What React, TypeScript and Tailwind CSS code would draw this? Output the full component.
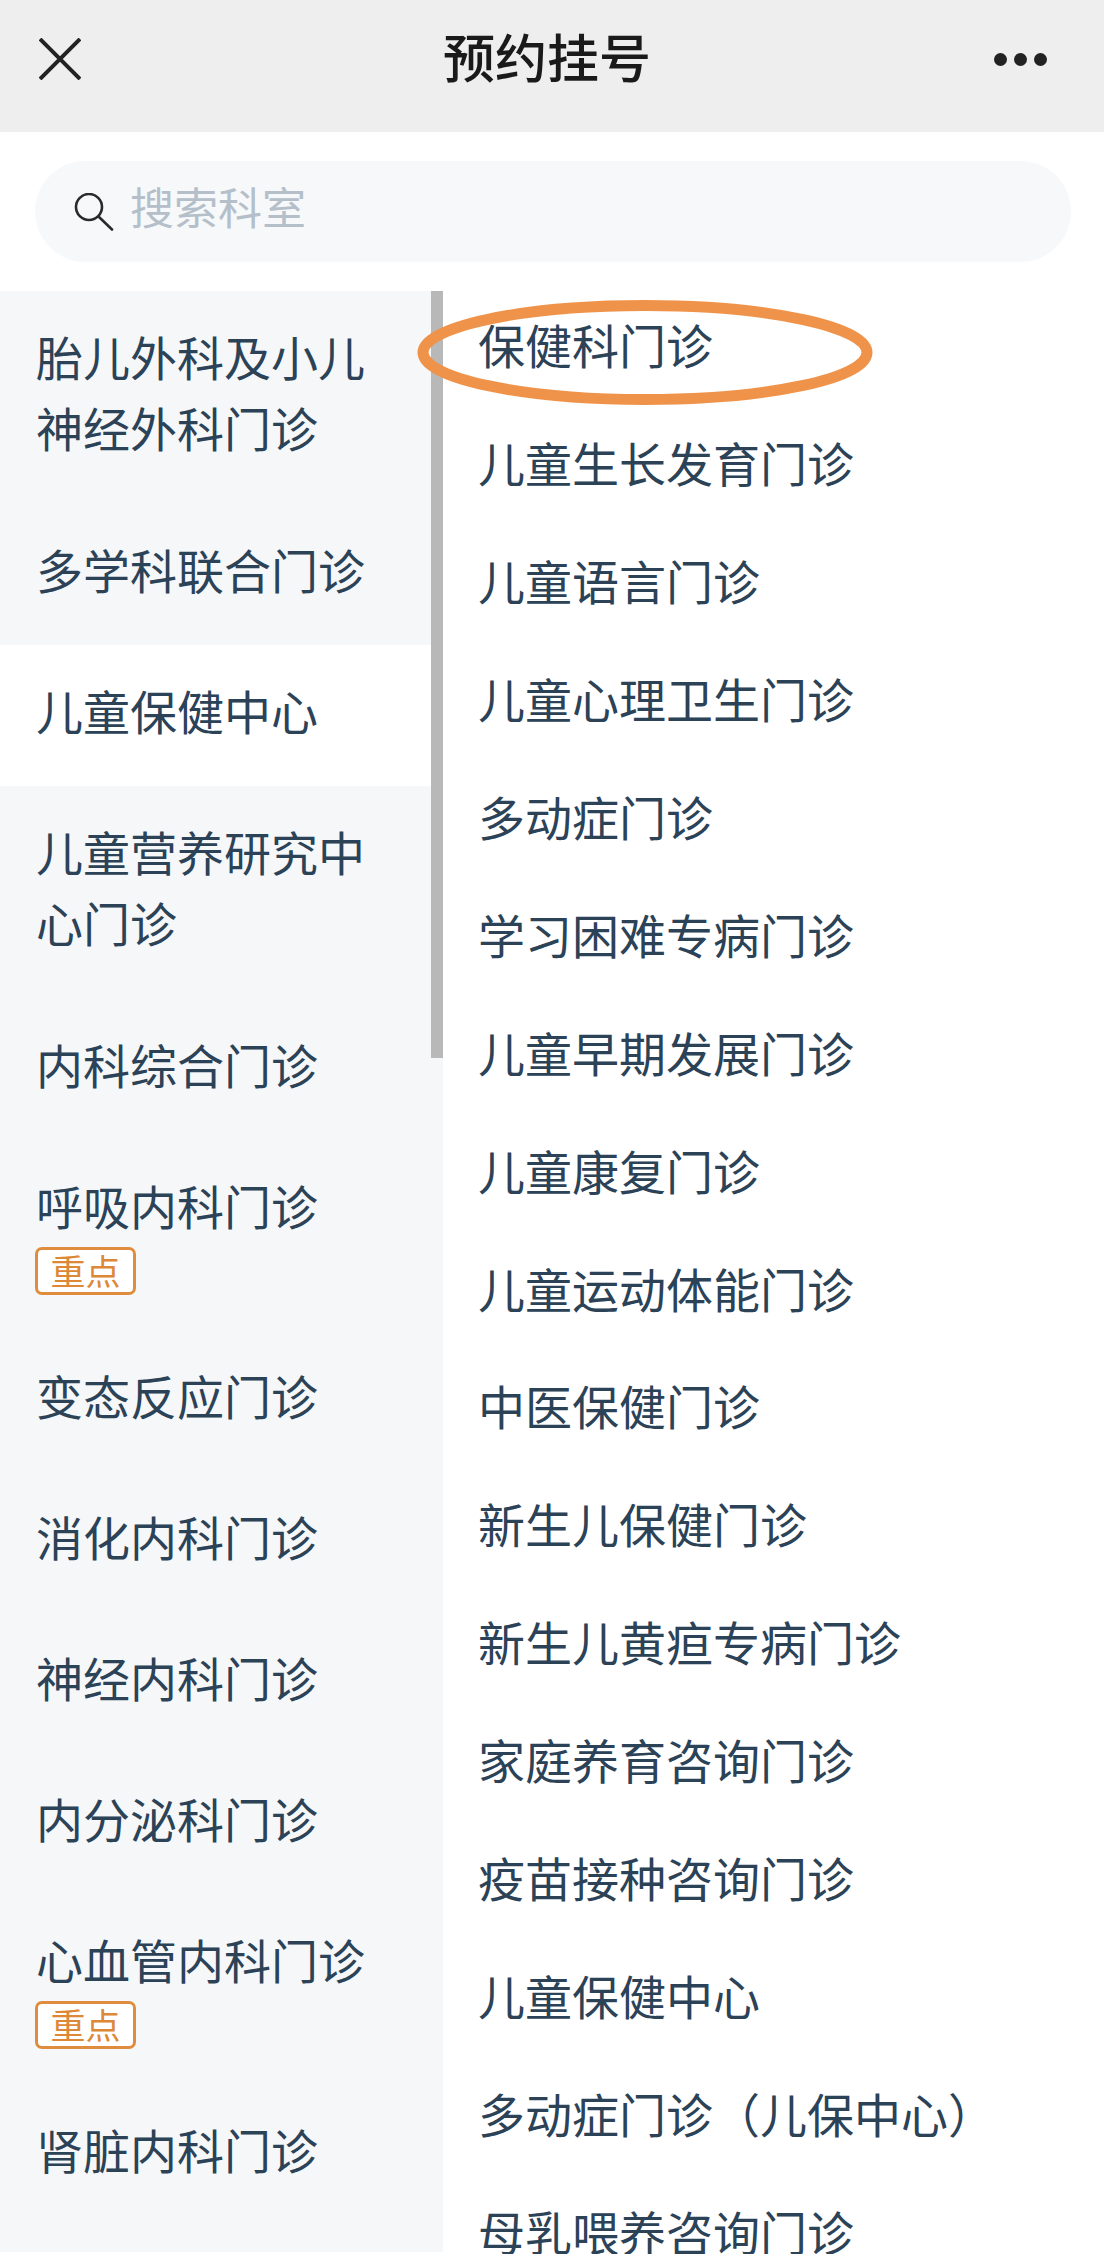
const font = { fontFamily: '"Noto Sans CJK SC", "Noto Sans", sans-serif' };

const departments = [
  { lines: ['胎儿外科及小儿', '神经外科门诊'] },
  { lines: ['多学科联合门诊'] },
  { lines: ['儿童保健中心'], active: true },
  { lines: ['儿童营养研究中', '心门诊'] },
  { lines: ['内科综合门诊'] },
  { lines: ['呼吸内科门诊'], badge: true },
  { lines: ['变态反应门诊'] },
  { lines: ['消化内科门诊'] },
  { lines: ['神经内科门诊'] },
  { lines: ['内分泌科门诊'] },
  { lines: ['心血管内科门诊'], badge: true },
  { lines: ['肾脏内科门诊'] },
];

const clinics = [
  '保健科门诊',
  '儿童生长发育门诊',
  '儿童语言门诊',
  '儿童心理卫生门诊',
  '多动症门诊',
  '学习困难专病门诊',
  '儿童早期发展门诊',
  '儿童康复门诊',
  '儿童运动体能门诊',
  '中医保健门诊',
  '新生儿保健门诊',
  '新生儿黄疸专病门诊',
  '家庭养育咨询门诊',
  '疫苗接种咨询门诊',
  '儿童保健中心',
  '多动症门诊（儿保中心）',
  '母乳喂养咨询门诊',
];

function Header() {
  return (
    <header className="flex h-[132px] items-center justify-between bg-[#eeeeee] pb-[14px] pl-[39px] pr-[57px]">
      <svg width="42" height="42" viewBox="0 0 42 42" fill="none" stroke="#222222" strokeWidth="4">
        <path d="M1 1 41 41M41 1 1 41" />
      </svg>
      <h1 className="mb-[6px] ml-[19px] text-[52px] font-medium leading-none text-[#1a1a1a]">预约挂号</h1>
      <div className="flex gap-[7px]">
        <span className="h-[13px] w-[13px] rounded-full bg-[#222222]" />
        <span className="h-[13px] w-[13px] rounded-full bg-[#222222]" />
        <span className="h-[13px] w-[13px] rounded-full bg-[#222222]" />
      </div>
    </header>
  );
}

function SearchBar() {
  return (
    <div className="h-[159px] pl-[35px] pr-[33px] pt-[29px]">
      <div className="flex h-[101px] items-center gap-[16px] rounded-full bg-[#f6f8fa] pl-[39px]">
        <svg width="40" height="38" viewBox="0 0 40 38" fill="none" stroke="#2a2a2a" strokeWidth="2.6" strokeLinecap="round">
          <circle cx="15" cy="14" r="13" />
          <path d="M25 24 38 36.5" />
        </svg>
        <span className="mb-[11px] text-[44px] leading-none text-[#b4bfca]">搜索科室</span>
      </div>
    </div>
  );
}

function Sidebar() {
  return (
    <aside className="relative w-[443px] shrink-0 bg-[#f5f7f9]">
      {departments.map((dept) => (
        <div
          key={dept.lines[0]}
          className={`px-[36px] pt-[29px] text-[47px] leading-[71px] ${dept.lines.length > 1 ? 'pb-[42px]' : 'pb-[41px]'} ${dept.badge ? '!pb-[35px]' : ''} ${dept.active ? 'bg-white' : ''}`}
        >
          {dept.lines.map((line) => (
            <div key={line} className="whitespace-nowrap">{line}</div>
          ))}
          {dept.badge && (
            <div className="mt-[7px] flex h-[48px] w-[101px] -translate-x-px items-center justify-center rounded-[7px] border-[3px] border-[#e08c3e] bg-white text-[35px] leading-none text-[#dd8836]">
              <span className="mb-[3px]">重点</span>
            </div>
          )}
        </div>
      ))}
      <div className="absolute right-0 top-0 h-[767px] w-[12px] bg-[#b8b8b8]" />
    </aside>
  );
}

function ClinicList() {
  return (
    <main className="-mt-[6px] flex-1 pl-[35px]">
      {clinics.map((name) => (
        <div key={name} className="flex h-[117.9px] items-center whitespace-nowrap text-[47px] leading-none">
          {name}
        </div>
      ))}
    </main>
  );
}

export default function App() {
  return (
    <div className="relative h-[2254px] w-[1104px] overflow-hidden bg-white text-[#2b4257]" style={font}>
      <Header />
      <SearchBar />
      <div className="flex h-[1961px]">
        <Sidebar />
        <ClinicList />
      </div>
      {/* 手绘的橙色圈 */}
      <svg className="absolute left-[417px] top-[300px]" width="456" height="105" viewBox="0 0 456 105" fill="none">
        <ellipse cx="228" cy="52.5" rx="222" ry="47" stroke="#f0934a" strokeWidth="11" />
      </svg>
    </div>
  );
}
